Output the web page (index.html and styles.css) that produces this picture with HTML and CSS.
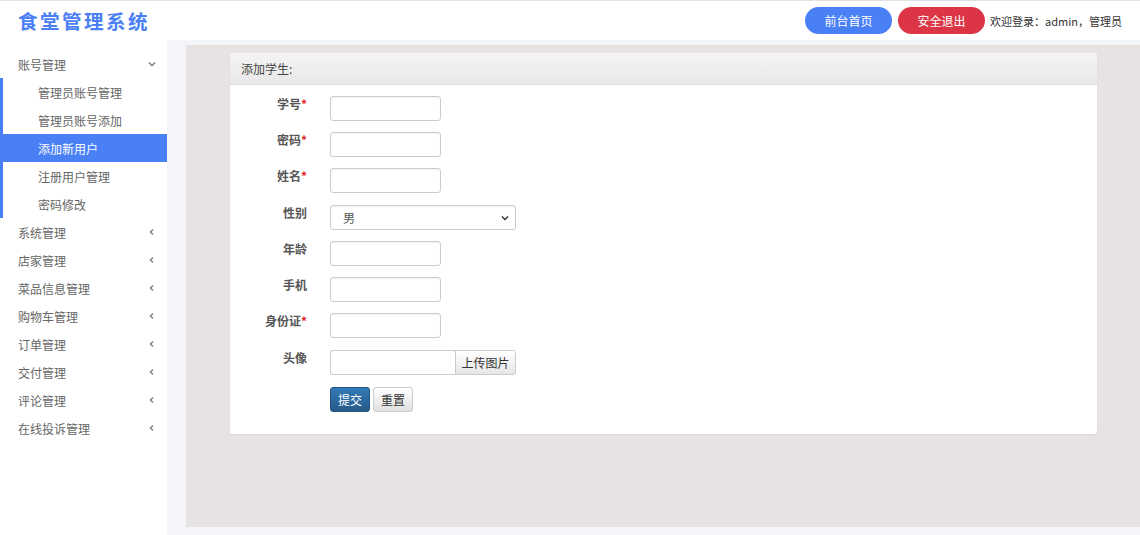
FILE: index.html
```html
<!DOCTYPE html>
<html lang="zh">
<head>
<meta charset="utf-8">
<title>食堂管理系统</title>
<link rel="stylesheet" href="styles.css">
</head>
<body>
<header class="topbar">
  <div class="brand">食堂管理系统</div>
  <div class="top-actions">
    <a class="pill pill-blue">前台首页</a>
    <a class="pill pill-red">安全退出</a>
    <span class="welcome">欢迎登录：admin，管理员</span>
  </div>
</header>
<div class="layout">
  <aside class="sidebar">
    <div class="menu-item">账号管理<svg class="chev" viewBox="0 0 10 10"><path d="M2 3.5 L5 6.5 L8 3.5" /></svg></div>
    <div class="submenu">
      <div class="sub-item">管理员账号管理</div>
      <div class="sub-item">管理员账号添加</div>
      <div class="sub-item active">添加新用户</div>
      <div class="sub-item">注册用户管理</div>
      <div class="sub-item">密码修改</div>
    </div>
    <div class="menu-item">系统管理<svg class="chev" viewBox="0 0 10 10"><path d="M6 2.5 L3.5 5 L6 7.5" /></svg></div>
    <div class="menu-item">店家管理<svg class="chev" viewBox="0 0 10 10"><path d="M6 2.5 L3.5 5 L6 7.5" /></svg></div>
    <div class="menu-item">菜品信息管理<svg class="chev" viewBox="0 0 10 10"><path d="M6 2.5 L3.5 5 L6 7.5" /></svg></div>
    <div class="menu-item">购物车管理<svg class="chev" viewBox="0 0 10 10"><path d="M6 2.5 L3.5 5 L6 7.5" /></svg></div>
    <div class="menu-item">订单管理<svg class="chev" viewBox="0 0 10 10"><path d="M6 2.5 L3.5 5 L6 7.5" /></svg></div>
    <div class="menu-item">交付管理<svg class="chev" viewBox="0 0 10 10"><path d="M6 2.5 L3.5 5 L6 7.5" /></svg></div>
    <div class="menu-item">评论管理<svg class="chev" viewBox="0 0 10 10"><path d="M6 2.5 L3.5 5 L6 7.5" /></svg></div>
    <div class="menu-item">在线投诉管理<svg class="chev" viewBox="0 0 10 10"><path d="M6 2.5 L3.5 5 L6 7.5" /></svg></div>
  </aside>
  <main class="main">
    <div class="content">
      <section class="panel">
        <div class="panel-head">添加学生:</div>
        <form class="panel-body">
          <div class="row"><label class="lbl">学号<span class="req">*</span></label><input class="ctl short" type="text"></div>
          <div class="row"><label class="lbl">密码<span class="req">*</span></label><input class="ctl short" type="password"></div>
          <div class="row gap12"><label class="lbl">姓名<span class="req">*</span></label><input class="ctl short" type="text"></div>
          <div class="row"><label class="lbl">性别</label>
            <div class="ctl long select"><span>男</span><svg class="sel-chev" viewBox="0 0 10 10"><path d="M2 3.5 L5 6.5 L8 3.5" /></svg></div>
          </div>
          <div class="row"><label class="lbl">年龄</label><input class="ctl short" type="text"></div>
          <div class="row"><label class="lbl">手机</label><input class="ctl short" type="text"></div>
          <div class="row gap12"><label class="lbl">身份证<span class="req">*</span></label><input class="ctl short" type="text"></div>
          <div class="row gap12"><label class="lbl">头像</label>
            <div class="file-group"><input class="file-input" type="text"><span class="file-btn">上传图片</span></div>
          </div>
          <div class="row btn-row"><span class="lbl"></span>
            <button type="button" class="btn btn-primary">提交</button>
            <button type="button" class="btn btn-default">重置</button>
          </div>
        </form>
      </section>
    </div>
  </main>
</div>
</body>
</html>
```

FILE: styles.css
```css
* { box-sizing: border-box; }
html, body { margin: 0; padding: 0; }
body {
  font-family: "Noto Sans CJK SC", "Noto Sans", "Liberation Sans", sans-serif;
  font-size: 12px;
  color: #333;
  background: #f4f5f8;
  width: 1140px;
  height: 535px;
  overflow: hidden;
}
.topbar {
  height: 40px;
  border-top: 1px solid #e2e2e2;
  background: #fff;
  display: flex;
  align-items: center;
  justify-content: space-between;
  padding: 0 18px 0 18px;
}
.brand {
  color: #4a7ff5;
  font-size: 19.5px;
  font-weight: 700;
  letter-spacing: 2.5px;
  line-height: 1;
}
.top-actions { display: flex; align-items: center; }
.pill {
  display: inline-flex;
  align-items: center;
  justify-content: center;
  width: 87px;
  height: 27px;
  border-radius: 14px;
  color: #fff;
  font-size: 12px;
  margin-right: 6px;
}
.pill-blue { background: #4a80f5; }
.pill-red { background: #dc3545; }
.welcome { margin-left: -1px; font-size: 11px; color: #333; }

.layout { display: flex; height: 495px; }
.sidebar {
  width: 167px;
  background: #fff;
  padding-top: 10px;
  flex-shrink: 0;
}
.menu-item {
  height: 28px;
  display: flex;
  align-items: center;
  justify-content: space-between;
  padding: 0 10px 0 18px;
  color: #666;
  font-size: 12px;
}
.chev { width: 10px; height: 10px; }
.chev path { fill: none; stroke: #888; stroke-width: 1.6; }
.submenu { border-left: 3px solid #4a80f5; }
.sub-item {
  height: 28px;
  display: flex;
  align-items: center;
  padding-left: 35px;
  color: #666;
  font-size: 12px;
}
.sub-item.active { background: #4a80f5; color: #fff; }

.main {
  flex: 1;
  padding: 5px 0 8px 19px;
  background: #f4f5f8;
}
.content {
  height: 100%;
  background: #e8e3e3;
  padding: 8px 43px 0 44px;
}
.panel {
  background: #fff;
  border-radius: 3px;
  box-shadow: 0 1px 2px rgba(0,0,0,0.06);
}
.panel-head {
  height: 32px;
  display: flex;
  align-items: center;
  padding-left: 11px;
  font-size: 12px;
  color: #444;
  background: linear-gradient(#f4f4f4, #e8e8e8);
  border-bottom: 1px solid #dcdcdc;
  border-radius: 3px 3px 0 0;
}
.panel-body { padding: 11px 0 22px 0; }
.row {
  display: flex;
  align-items: flex-start;
  margin-bottom: 11px;
}
.row.gap12 { margin-bottom: 12px; }
.row.btn-row { margin-bottom: 0; }
.lbl {
  width: 77px;
  text-align: right;
  font-weight: 700;
  color: #555;
  font-size: 12px;
  line-height: 14px;
  padding-top: 1px;
  margin-right: 23px;
  flex-shrink: 0;
}
.req { color: #e02424; }
.ctl {
  height: 25px;
  border: 1px solid #ccc;
  border-radius: 3px;
  background: #fff;
  box-shadow: inset 0 1px 1px rgba(0,0,0,0.05);
  font-size: 12px;
  padding: 0 8px;
}
.short { width: 111px; }
.long { width: 186px; }
.select {
  display: flex;
  align-items: center;
  justify-content: space-between;
  padding: 0 5px 0 12px;
  color: #555;
}
.sel-chev { width: 10px; height: 10px; }
.sel-chev path { fill: none; stroke: #333; stroke-width: 1.4; }
.file-group { display: flex; width: 186px; height: 25px; }
.file-input {
  width: 125px;
  height: 25px;
  border: 1px solid #ccc;
  border-right: none;
  border-radius: 3px 0 0 3px;
  padding: 0 8px;
}
.file-btn {
  flex: 1;
  display: flex;
  align-items: center;
  justify-content: center;
  border: 1px solid #ccc;
  border-radius: 0 3px 3px 0;
  background: linear-gradient(#fff, #e6e6e6);
  color: #333;
  font-size: 12px;
}
.btn {
  height: 25px;
  width: 40px;
  font-family: inherit;
  font-size: 12px;
  border-radius: 3px;
  padding: 0;
  cursor: pointer;
}
.btn-primary {
  background: linear-gradient(#337ab7, #265a88);
  border: 1px solid #245580;
  color: #fff;
  margin-right: 3px;
}
.btn-default {
  background: linear-gradient(#fff, #e0e0e0);
  border: 1px solid #ccc;
  color: #333;
}
```
